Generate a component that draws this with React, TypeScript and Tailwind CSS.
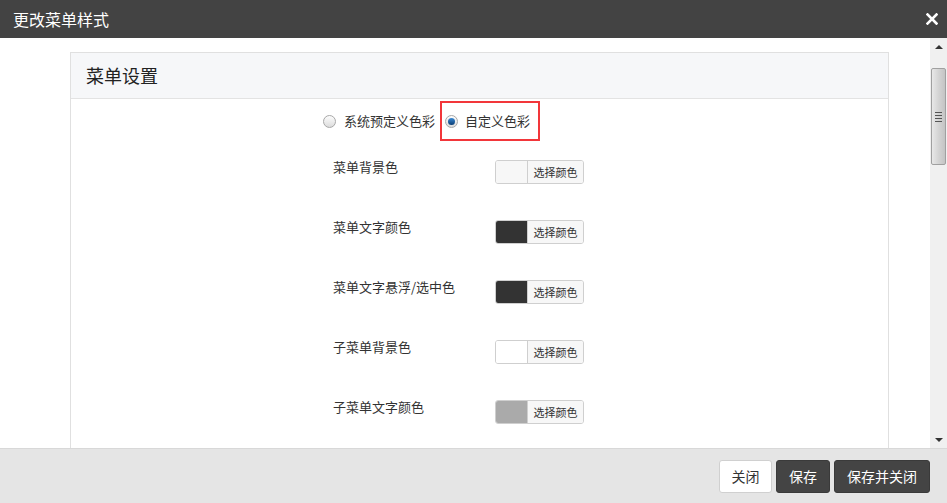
import React from 'react';

const font = { fontFamily: '"Noto Sans CJK SC", "Liberation Sans", sans-serif' };

const rows = [
  { label: '菜单背景色', color: 'bg-[#f7f7f7]' },
  { label: '菜单文字颜色', color: 'bg-[#333333]' },
  { label: '菜单文字悬浮/选中色', color: 'bg-[#333333]' },
  { label: '子菜单背景色', color: 'bg-white' },
  { label: '子菜单文字颜色', color: 'bg-[#aaaaaa]' },
];

function Radio({ checked }: { checked?: boolean }) {
  return (
    <span className="w-[13px] h-[13px] rounded-full border border-[#a8a8a8] bg-gradient-to-b from-[#fdfdfd] to-[#dcdcdc] flex items-center justify-center shrink-0">
      {checked && <span className="w-[7px] h-[7px] rounded-full bg-gradient-to-b from-[#3a8ad4] to-[#0b3e75]" />}
    </span>
  );
}

function ColorPicker({ color }: { color: string }) {
  return (
    <div className="flex h-[24px] w-[89px] rounded-[3px] border border-[#cfcfcf] overflow-hidden shrink-0">
      <span className={`w-[32px] h-full border-r border-[#cfcfcf] ${color}`} />
      <span className="flex-1 bg-[#f7f7f7] text-[11px] text-[#333] flex items-center justify-center">选择颜色</span>
    </div>
  );
}

function Scrollbar() {
  return (
    <div className="w-[17px] bg-[#f0f0f0] flex flex-col items-center shrink-0">
      <div className="h-[17px] w-full flex items-center justify-center">
        <span className="w-0 h-0 border-l-[4px] border-r-[4px] border-b-[4px] border-l-transparent border-r-transparent border-b-[#333]" />
      </div>
      <div className="mt-[13px] w-[15px] h-[97px] rounded-[2px] border border-[#a0a0a0] bg-gradient-to-r from-[#e8e8e8] via-[#d4d4d4] to-[#c4c4c4] flex flex-col items-center justify-center gap-[2px]">
        <span className="w-[7px] h-px bg-[#555]" />
        <span className="w-[7px] h-px bg-[#555]" />
        <span className="w-[7px] h-px bg-[#555]" />
        <span className="w-[7px] h-px bg-[#555]" />
      </div>
      <div className="flex-1" />
      <div className="h-[17px] w-full flex items-center justify-center">
        <span className="w-0 h-0 border-l-[4px] border-r-[4px] border-t-[4px] border-l-transparent border-r-transparent border-t-[#333]" />
      </div>
    </div>
  );
}

export default function App() {
  return (
    <div className="w-[947px] h-[503px] flex flex-col bg-white overflow-hidden" style={font}>
      {/* Title bar */}
      <div className="h-[38px] bg-[#434343] flex items-center justify-between pl-[13px] pr-[8px] shrink-0">
        <span className="text-white text-[16px]">更改菜单样式</span>
        <svg width="12" height="12" viewBox="0 0 12 12" className="mr-[1px]">
          <path d="M1.5 1.5 L10.5 10.5 M10.5 1.5 L1.5 10.5" stroke="#fff" strokeWidth="2.6" strokeLinecap="square" />
        </svg>
      </div>

      {/* Body */}
      <div className="flex-1 flex min-h-0">
        <div className="flex-1 pl-[70px] pr-[41px] pt-[14px] overflow-hidden">
          <div className="border border-[#e0e0e0] h-[420px]">
            <div className="h-[46px] bg-[#f6f7f9] border-b border-[#e3e3e3] flex items-center pl-[15px]">
              <span className="text-[18px] text-[#222]">菜单设置</span>
            </div>

            <div className="pl-[252px] pt-[2px]">
              <div className="flex items-center h-[40px] text-[13px] text-[#333]">
                <label className="flex items-center gap-[8px]">
                  <Radio />
                  <span>系统预定义色彩</span>
                </label>
                <label className="ml-[-21px] h-[40px] w-[100px] border-2 border-[#f2363a] flex items-center gap-[7px] pl-[3px] ml-[5px]">
                  <Radio checked />
                  <span>自定义色彩</span>
                </label>
              </div>

              <div className="flex flex-col gap-[36px] pt-[19px] pl-[10px]">
                {rows.map((r) => (
                  <div key={r.label} className="flex items-start h-[24px]">
                    <span className="w-[162px] text-[13px] leading-[16px] text-[#333] -mt-[1px]">{r.label}</span>
                    <ColorPicker color={r.color} />
                  </div>
                ))}
              </div>
            </div>
          </div>
        </div>
        <Scrollbar />
      </div>

      {/* Footer */}
      <div className="h-[55px] bg-[#e5e5e5] border-t border-[#d8d8d8] flex items-center justify-end gap-[4px] pr-[17px] shrink-0">
        <button className="h-[33px] w-[53px] bg-white border border-[#d0d0d0] rounded-[3px] text-[14px] text-[#333]">关闭</button>
        <button className="h-[33px] w-[54px] bg-[#444] border border-[#3a3a3a] rounded-[3px] text-[14px] text-white">保存</button>
        <button className="h-[33px] w-[96px] bg-[#444] border border-[#3a3a3a] rounded-[3px] text-[14px] text-white">保存并关闭</button>
      </div>
    </div>
  );
}
